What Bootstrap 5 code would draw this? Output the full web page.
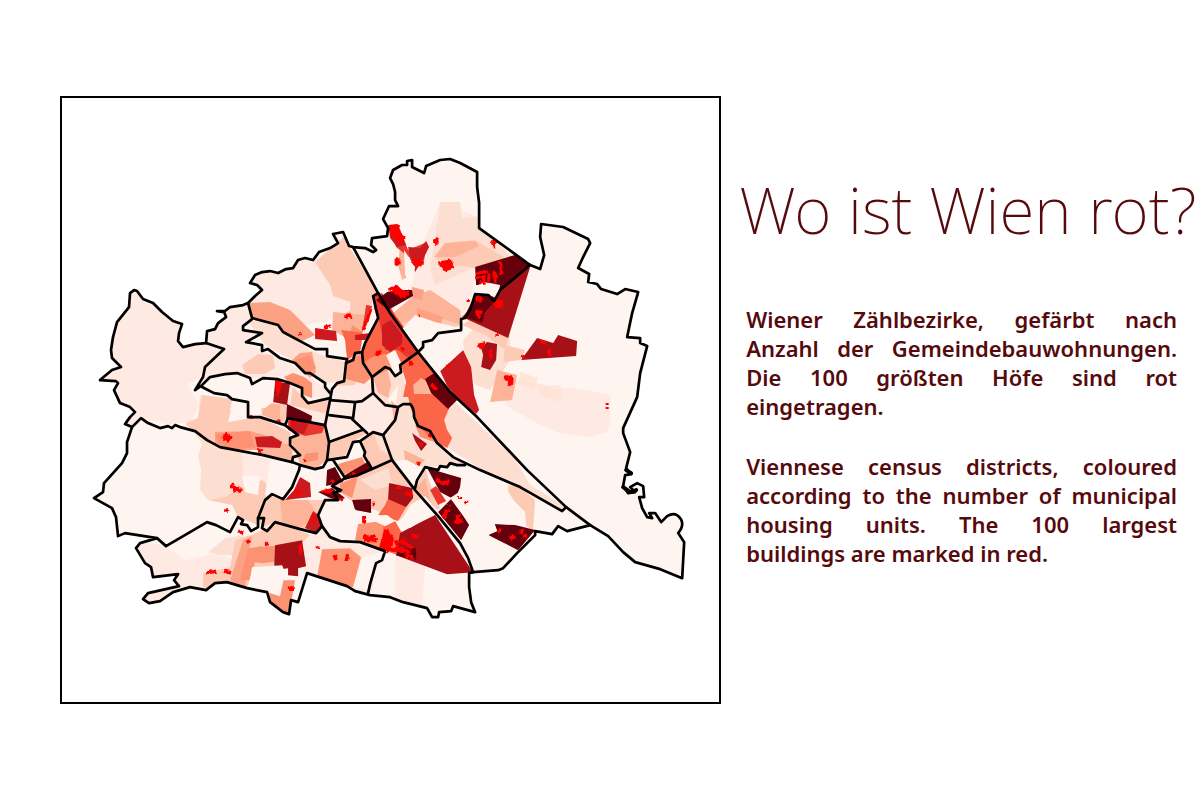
<!DOCTYPE html>
<html lang="de">
<head>
<meta charset="utf-8">
<meta name="viewport" content="width=device-width, initial-scale=1">
<title>Wo ist Wien rot?</title>
<link href="https://cdn.jsdelivr.net/npm/bootstrap@5.3.0/dist/css/bootstrap.min.css" rel="stylesheet">
<script src="https://cdn.jsdelivr.net/npm/bootstrap@5.3.0/dist/js/bootstrap.bundle.min.js"></script>
<style>
body{background:#fff;color:#560a0d;font-family:"Noto Sans","Open Sans",sans-serif}
.poster{padding-left:5%}
.map-frame{flex:0 0 58%;border:2px solid #000}
.map-frame svg{display:block;width:100%;height:auto}
.story{padding:0 0 58px 18px}
.headline{font-weight:200;font-size:64px;line-height:70px;margin-bottom:60px;white-space:nowrap}
.copy{font-weight:600;font-size:22px;line-height:29px;text-align:justify;padding:0 23px 0 7px}
.copy p{margin-bottom:31px}
.c0{fill:#fff5f0}.c1{fill:#feeae2}.c2{fill:#fddfd2}.c3{fill:#fdcab5}.c4{fill:#fcb398}.c5{fill:#fc9272}.c6{fill:#fb6548}.c7{fill:#ea372d}.c8{fill:#cb1b20}.c9{fill:#a81017}.c10{fill:#67000d}
.estates{fill:#f00;stroke:#f00;stroke-width:3;stroke-linejoin:bevel}
.borders{fill:none;stroke:#000;stroke-width:2.7;stroke-linejoin:round;stroke-linecap:round}
</style>
</head>
<body>
<main class="poster d-flex align-items-center min-vh-100">
<div class="map-frame">
<svg viewBox="62 98 657 603" role="img" aria-label="Wiener Zählbezirke">
<defs>
<path id="city" d="M134 290L137 291 143 299 153 303 162 312 173 321 182 324 179 333 178 341 183 347 195 344 206 343 207 331 215 329 218 323 226 317 224 312 217 311 225 311 230 307 243 305 248 303 255 296 262 290 257 285 250 283 255 275 262 272 270 271 278 273 286 269 293 268 298 260 305 258 313 260 319 252 330 248 338 243 333 234 343 232 349 246 353 247 365 248 373 252 376 250 371 245 372 238 387 236 388 228 383 219 389 206 398 206 395 200 395 192 393 184 390 178 393 170 402 165 407 165 407 161 412 160 412 167 424 173 426 166 440 160 450 159 460 163 477 172 477 187 479 203 479 228 530 265 540 269 544 255 540 237 541 224 563 227 588 239 590 243 583 257 578 268 589 274 588 282 597 284 601 289 617 294 625 289 638 292 632 313 627 337 640 338 640 343 647 346 640 373 637 397 623 428 623 433 630 452 626 468 631 474 625 475 623 486 628 493 635 492 630 487 637 483 643 486 644 497 639 497 642 508 647 517 652 518 649 513 655 513 661 522 667 516 Q675 511 680 518Q685 524 678 533L684 542 682 578 660 569 635 562 623 552 608 536 590 525 567 531 558 526 552 534 535 531 535 535 517 553 503 568 498 570 473 572 469 573 469 587 471 602 475 612 453 606 451 611 439 612 438 617 432 617 427 608 403 602 390 597 370 595 355 591 347 586 307 573 298 602 291 600 289 614 283 612 270 602 267 592 247 588 227 582 215 583 206 590 190 587 173 592 160 601 149 603 143 599 148 593 179 586 174 580 178 574 153 577 151 567 145 563 136 548 140 543 157 538 125 533 118 536 116 517 112 508 94 498 103 492 104 483 122 463 127 453 127 442 132 427 125 424 130 417 135 412 130 407 120 403 114 390 118 383 116 381 100 380 112 370 121 367 112 358 111 350 113 337 117 322 129 307 130 293Z"/>
<clipPath id="inside"><use href="#city"/></clipPath>
<filter id="rough" x="0" y="0" width="100%" height="100%"><feTurbulence type="fractalNoise" baseFrequency=".25" numOctaves="2" seed="4"/><feDisplacementMap in="SourceGraphic" scale="4" xChannelSelector="R" yChannelSelector="G"/></filter>
</defs>
<use href="#city" class="c0"/>
<g clip-path="url(#inside)">
<g class="c1">
<path d="M90 280H210L224 349 205 367 203 377 187 384 200 405 190 422 170 424 170 408 187 384 170 408 170 425 141 418 130 428 90 430ZM200 300H250L252 319 243 328 262 333 246 342 262 351 280 358 305 373 330 393 330 400 302 396 277 379 250 378 237 373 202 380ZM250 260L316 255 330 280 350 300 348 310 325 322 300 325 275 305 248 303Z"/>
<path d="M420 250L440 202 480 218V230L520 262 475 268 470 310 430 340 405 330 410 290ZM270 450H300L283 499 265 500 240 480ZM136 540L166 546 185 560 215 553 236 560 230 585 140 605ZM395 551L425 565 422 610 395 600Z"/>
<path d="M505 405L512 378 530 382 560 387 585 390 610 395V425L590 437 560 433 540 425ZM322 526L340 541 385 551 370 595 307 573 290 550Z"/>
</g>
<g class="c2">
<path d="M200 395L232 399 228 420 250 425V480L260 490 240 490 225 497 208 500 200 490 201 470 198 455 202 445 195 431 185 422 198 418ZM208 552L225 538 244 535 240 555 222 555ZM440 202H460L462 218 477 217 479 230 500 245 515 262 480 265 435 285 430 270ZM247 320L280 325 310 350 327 357 347 362 345 380 325 384 300 365 265 345ZM477 325L510 335 510 360 490 390 475 385 465 360 463 340Z"/>
</g>
<path class="c1" d="M535 385L560 385 562 390 570 387 585 392 595 405 605 405 610 420 608 432 590 437 555 432 542 420ZM242 451L262 455 263 475 252 480 243 475Z"/>
<path class="c2" d="M537 384L562 390 560 402 540 396ZM520 372L538 378 534 390 518 384Z" fill-opacity=".7"/>
<g class="c3">
<path d="M315 262L333 246 345 236 353 247 378 293 373 296 368 330 333 320 350 310 350 302 333 296 330 285ZM242 365L258 354 273 355 275 368 265 374 245 374ZM202 395L232 399 230 410 240 413 248 418 260 417 290 432 293 457 270 450 220 447 205 440 185 424 198 418ZM240 488L262 480 268 485 265 500 258 525 238 517 232 505 208 500 225 497ZM475 240L512 262 478 268 450 265 435 258 455 242ZM490 305L510 330 505 350 485 335 462 325ZM505 345L525 350 520 360 503 362ZM508 485L520 487 535 500 533 530 526 526 525 512 508 495ZM240 540L280 522 310 535 295 550 280 560 265 575 240 588ZM203 573L230 567 235 540 250 535 248 590 203 587ZM385 315L415 305 440 310 462 325 430 335 405 340 395 325Z"/>
</g>
<g class="c4">
<path d="M333 312L365 315 370 330 350 340 332 330ZM434 257L445 243 475 241 479 246 455 257ZM385 320L412 297 430 290 460 310 462 325 430 315 395 325ZM497 370L517 375 512 400 490 402ZM400 245L405 250 411 275 402 280 398 265ZM260 440L292 445 292 460 260 455Z"/>
<path d="M248 303L270 302 290 310 300 320 315 335 300 342 284 333 278 325 252 319ZM292 360L300 353 312 352 316 372 310 378 300 368ZM215 432L250 431 265 435 262 450 232 450 215 443ZM243 540L252 536 249 550 262 545 263 560 247 560 245 590 230 580ZM412 287L424 290 422 300 413 298ZM417 308L443 317 440 328 418 318Z" fill="#fca183"/>
</g>
<path class="c5" d="M322 549L350 548 361 557 353 587 317 577ZM268 580H295L289 614 270 602ZM248 548L283 545V560L263 563 255 562 250 580 240 580ZM352 325L363 332 360 353 346 363 347 345ZM215 434L250 431 255 447 232 450 218 443Z"/>
<g class="c6">
<path d="M373 296L378 293 418 352 400 365 395 376 385 367 372 376 363 363 362 352 375 325ZM341 330L365 333 359 353 347 360 345 340Z"/>
</g>
<path class="c0" d="M371 303L378 318 361 353 362 335ZM316 341L344 341 347 358 327 356 327 349 315 349Z"/>
<g class="c7"><path d="M373 296L382 293 395 315 408 333 418 352 408 358 398 350 385 350 380 325ZM388 227L398 224 404 240 408 250 420 245 427 242 424 260 415 270 410 258 396 247ZM366 305L372 306 369 320 362 332Z"/></g>
<g class="c8">
<path d="M315 328L336 331 337 341 315 339ZM388 225L397 224 402 235 406 245 397 247 390 238ZM408 247L420 248 426 241 429 247 423 259 415 272 411 262ZM440 371L463 350 471 367 474 395 479 410 476 414 450 392ZM255 437L272 436 282 442 280 448 257 447ZM382 325L391 320 402 335 402 344 390 352 382 345ZM355 335L370 333 365 340 355 340Z"/>
</g>
<g class="c9">
<path d="M500 278L530 267 508 338 462 317ZM521 360L537 338 553 343 558 335 577 341 576 356ZM481 348L487 342 497 344 496 360 490 370 481 367 483 355ZM275 545L302 540 306 566 298 568 298 576 288 575V568L274 570Z"/>
</g>
<path class="c10" d="M475 267L518 254 530 265 502 290 476 285ZM475 295L490 297 494 302 485 312 482 323 464 317ZM376 300L390 290 412 290 413 296 388 310Z"/>
<!-- inner districts -->
<g class="c1">
<path d="M362 353L363 363 372 377 373 393 355 402 332 399 337 383 345 378 347 360ZM330 400L355 402 353 418 367 433 329 442 325 425ZM355 402L373 393 385 405 398 407 395 420 383 435 373 432 353 418Z"/>
<path d="M277 379L302 388 308 403 330 400 325 425 287 418 260 417 262 404 270 400Z"/>
</g>
<g class="c2">
<path d="M398 407L410 407 418 426 437 443 465 465 440 466 425 467 415 487 392 460 383 435ZM387 369L401 365 408 400 410 407 385 405 373 393 372 377ZM455 402L566 507 562 511 520 487 480 469 447 447 450 436 441 430 443 418Z"/>
</g>
<path class="c0" d="M508 447L566 507 530 485ZM387 401L398 385 396 404Z"/>
<g class="c3">
<path d="M329 442L362 430 367 433 353 442 347 457 327 460ZM360 441L373 432 383 435 392 460 372 469 364 456ZM345 478L392 460 415 490 425 496 400 520 350 500 333 487ZM260 402L287 405 285 423 262 415ZM293 387L308 403 330 401 327 414 290 405ZM415 490L425 468 432 490 440 508 433 512ZM335 386L345 379 347 360 355 354 363 360 355 385ZM258 518L270 494 283 499 300 500 325 500 318 515 322 526 316 533 275 522 262 528Z"/>
</g>
<path class="c2" d="M384 436L391 456 380 450 374 434ZM360 480L388 468 392 485 375 490Z"/>
<g class="c4">
<path d="M290 438L325 425 329 442 327 460 315 469 300 464ZM373 377L387 368 391 385 388 398 378 393ZM404 450L425 460 417 468 405 462ZM262 415L266 402 280 405 280 422ZM280 500L308 500 318 515 300 528 282 522ZM391 400L398 408 394 422ZM416 488L425 478 430 500 438 512Z"/>
</g>
<g class="c5">
<path d="M347 362L361 353 363 364 372 377 364 384 346 379ZM284 377L293 373 304 377 312 383 312 398 303 395 300 386 290 384ZM338 464L362 457 366 465 343 475ZM340 484L358 476 352 498 340 492ZM415 425L430 431 437 443 420 437ZM363 363L372 357 385 354 392 358 395 366 388 370 372 377ZM358 523L378 517 385 527 385 551 355 540ZM305 454L318 452 318 460 303 463ZM295 360L310 355 316 368 305 374Z"/>
</g>
<g class="c6">
<path d="M401 365L418 352 455 395 444 420 447 430 452 438 447 448 437 443 418 426 410 407 408 397 403 397 406 382ZM385 505L390 494 406 507 398 521 378 515ZM383 527L395 521 403 535 412 545 412 560 384 550Z"/>
</g>
<path class="c4" d="M413 385L421 378 433 386 435 394H414Z"/>
<path class="c7" d="M288 421L303 419 325 425 322 433 305 436 288 430ZM430 490L436 486 446 501 438 505Z"/>
<path class="c8" d="M300 477L310 483 311 497 285 500 294 490ZM305 528L313 511 318 515 322 526 316 533ZM290 421L303 419 308 425 304 434 290 431Z"/>
<g class="c9">
<path d="M412 433L427 444 421 451 415 441ZM389 483L412 488 413 498 406 507 388 499ZM275 383L290 383 287 405 273 402ZM400 533L415 525 435 515 473 572 447 574 396 555Z"/>
</g>
<g class="c10">
<path d="M425 379L434 373 457 400 448 409 431 393ZM427 468L461 478 460 487 455 500 440 492ZM438 512L452 498 469 525 461 540ZM488 535L497 531 494 524 515 525 535 530 518 550ZM287 404L300 410 312 416 311 423 286 420ZM345 475L369 461 373 469 345 480ZM327 470L335 467 343 482 326 486ZM318 492L332 488 345 498 338 500 330 498ZM352 500L371 499 371 513 355 510ZM399 548L416 548 416 560 396 555Z"/>
</g>
<g class="c0">
<path d="M204 383L210 377 237 373 250 378 274 380 273 402 265 408 252 408 248 402 232 399ZM473 287L485 282 500 285 497 298 488 295 475 294ZM401 330L415 315 435 322 460 328 438 333 432 340 423 347 418 352ZM425 360L461 339 464 349 440 371ZM401 521L410 505 425 496 438 511 410 528ZM325 500L345 500 358 512 390 520 358 524 353 542 330 537 318 515ZM362 516L387 515 395 521 385 526ZM270 460L298 464 283 499 265 495ZM242 476H260L258 495 245 492ZM250 578L252 567 282 565 285 572 280 596 267 592 247 588ZM363 557L385 551 370 590 353 587ZM450 498L465 488 507 490 520 510 525 525 494 522 497 531 488 535 505 545 475 567 464 540 470 525ZM391 461L407 460 422 468 415 487ZM232 405L248 405 246 419 228 422ZM350 248L375 253 390 240 400 290 378 293ZM350 445L363 441 366 455 343 460ZM404 250L415 267 412 285 405 275ZM386 355L395 350 402 365 395 376Z"/>
</g>
</g>
<g class="estates" filter="url(#rough)">
<path d="M391 225L397 225 398 233 404 238 402 242 393 236ZM439 263L450 261 453 267 445 270ZM413 260L423 262 420 265 414 264ZM434 242L437 239V244ZM396 258L400 262 396 265ZM492 242L495 241 494 247ZM390 289L396 286 402 292 408 291 405 297 399 295ZM495 300L502 302 500 307 496 306ZM475 297L481 298 480 302ZM476 311L481 312 479 317Z"/>
<path d="M475 278L483 277M476 273L488 272M480 280L481 284M484 275V285M489 274L488 283M495 274V283M500 262L502 275M493 271L497 278M468 300V302M388 327L389 329M389 343L393 345M401 347L404 351M409 361L412 365M375 354L381 351 377 355M418 315L420 316M346 318L349 314 351 318M316 332L320 333M324 327L331 326M299 333L301 334M371 309L363 330"/>
<path d="M479 345L485 344 480 348ZM490 350L491 358M497 334L497 337M540 341L546 343M522 356L525 357M547 352L550 351V357M505 377L512 377 511 385ZM275 381H280L277 396M249 416L254 418M277 420L280 422M291 420L295 424M224 438L226 434 230 437 228 440ZM257 451L262 451M303 460H305M331 480L334 482M351 476L355 473M322 491L332 492M338 498L343 500M231 485L236 487 241 491 234 490ZM224 510L228 510M238 531L243 533M247 540L249 543M265 543L269 544M206 573L216 571M224 571L231 573M300 545L301 555M317 546L318 549M334 555L336 560M348 554L346 561M288 587L293 588 289 590M295 490L302 494M312 515L315 522" stroke-width="3.5"/>
<path d="M363 536L370 538 375 535M364 540L377 540M386 530L392 539 390 546 381 548ZM397 540V551M401 540L412 548M386 550L402 549 410 553M405 556L413 557M436 479L443 483 449 482M443 518L448 509M455 522L463 520M458 515L458 524M460 497V499M465 501L467 503M498 530L500 532M510 539L514 536M520 531L523 532M523 536L527 536M448 505V506M364 516V523M372 504L374 505M396 487L402 488M405 493L412 495M416 463L420 464M428 436H431M420 443L422 446M431 384L436 389M447 366L450 367M411 536L419 536" stroke-width="4"/>
</g>
<path d="M607 403V405M607 407V409" stroke="#f00" stroke-width="3"/>
<g class="borders">
<use href="#city"/>
<path d="M132 427L141 418 148 423 160 428 168 426 172 428 175 425 180 427 195 431 207 440 220 447 263 455 292 462 300 465 315 469 323 467 327 460 329 442 325 425 330 400 332 389 337 383 344 381 346 363 353 360 355 353 362 352 365 343 378 318 373 296 378 293"/>
<path d="M157 538L166 546 190 532 207 522 216 525 230 532 238 517 243 520 241 524 247 525 251 531 258 527 258 518 264 518 262 528 267 531 275 522 300 529 316 533 322 526 330 537 340 541 360 542 385 551 382 560 376 563 370 584 368 593"/>
<path d="M258 518L265 500 272 494 283 499 292 487 299 470 300 465M322 526L318 515 325 500 338 500 334 493 341 490 332 486 345 478 358 475 372 469 392 460M340 491L332 486M327 460L347 457 353 442 360 441 373 432 383 435 395 420 398 407M345 478L333 460M360 441L365 452 364 456 372 469M329 442L362 430M330 400L355 402 353 418 329 415M352 419L367 433M355 402L362 401 373 393 385 405 398 407 403 404 410 404Q414 407 414 417L418 426 430 431 437 443 453 457 480 470 520 487 562 511 566 507"/>
<path d="M383 435L392 460 415 490 438 516 460 543 468 558 473 572M415 488L417 480 425 467 438 470 440 466 447 467 450 463 457 465 465 465"/>
<path d="M353 247L378 293 390 313 418 352 450 392 477 417 527 470 566 507 590 525M530 265L500 290 494 301 488 295 475 294 470 310 465 318 461 319 461 330 438 333 432 340 423 342 423 347 418 352 400 365 401 372 395 376 390 369 385 367 372 377M362 352L363 363 372 377 373 393"/>
<path d="M248 303L252 318 278 325 283 332 300 341 315 349 327 349 327 356 347 359 346 363M252 319L243 326 243 330 262 333 246 342 262 345 262 351 268 349 280 358 295 363 305 373 310 373 325 383 325 387 330 393"/>
<path d="M206 343L224 349 205 367 203 377 195 390 202 385 210 377 225 374 237 373 250 378 252 384 263 378 277 379 290 383 302 388 302 396 308 403 330 398M202 387L214 393 227 395 232 399 248 402 248 417 260 417 285 425 298 435 290 438 290 445 300 455 293 457 292 462M285 425L288 418 325 425"/>
<path d="M623 487L630 492 636 490M626 470L631 473" stroke-width="4"/>
</g>
</svg>
</div>
<div class="story flex-grow-1">
<h1 class="headline">Wo ist Wien rot?</h1>
<div class="copy">
<p>Wiener Zählbezirke, gefärbt nach Anzahl der Gemeindebauwohnungen. Die 100 größten Höfe sind rot eingetragen.</p>
<p class="mb-0" lang="en">Viennese census districts, coloured according to the number of municipal housing units. The 100 largest <span class="text-nowrap">buildings are marked in red.</span></p>
</div>
</div>
</main>
</body>
</html>
